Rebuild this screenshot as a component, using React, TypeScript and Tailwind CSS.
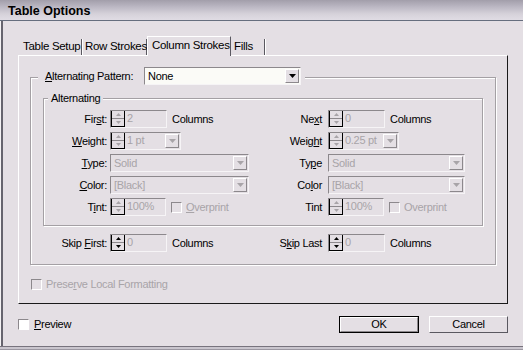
import React from "react";

const DIS = "text-[#a8a4a8]";

function U({ children }: { children: React.ReactNode }) {
  return <span className="underline underline-offset-[1px] decoration-1">{children}</span>;
}

function Tri({ up, color }: { up: boolean; color: string }) {
  return (
    <svg width="5" height="3" viewBox="0 0 5 3">
      <path d={up ? "M0 3H5L2.5 0Z" : "M0 0H5L2.5 3Z"} fill={color} />
    </svg>
  );
}

function SpinBtns({ on }: { on: boolean }) {
  const c = on ? "#000" : "#a8a4a8";
  return (
    <div className="flex flex-col w-[14px] h-full border-r border-b border-l border-black bg-[#e4dfe4] shrink-0">
      <div className="flex-1 flex items-center justify-center border-b border-[#8c888c]">
        <Tri up color={c} />
      </div>
      <div className="flex-1 flex items-center justify-center">
        <Tri up={false} color={c} />
      </div>
    </div>
  );
}

function ArrowBtn({ on }: { on: boolean }) {
  return (
    <div className="w-[14px] h-[14px] mt-[1px] mr-[1px] shrink-0 flex items-center justify-center bg-[#e4dfe4] border-t border-l border-[#ffffff] border-r border-b border-r-[#8c888c] border-b-[#8c888c]">
      <svg width="7" height="4" viewBox="0 0 7 4">
        <path d="M0 0H7L3.5 4Z" fill={on ? "#000" : "#a8a4a8"} />
      </svg>
    </div>
  );
}

function Spin({
  value,
  w,
  on = false,
  drop = false,
}: {
  value: string;
  w: string;
  on?: boolean;
  drop?: boolean;
}) {
  return (
    <div
      className={`flex h-[18px] ${w} shrink-0 border-t border-l border-[#8c888c] border-r border-b border-r-[#f6f4f6] border-b-[#f6f4f6]`}
    >
      <SpinBtns on={on} />
      <span className={`flex-1 pl-[2px] leading-[15px] ${DIS}`}>{value}</span>
      {drop && <ArrowBtn on={false} />}
    </div>
  );
}

function Drop({ value, w, on = false }: { value: string; w: string; on?: boolean }) {
  return (
    <div
      className={`flex h-[18px] ${w} shrink-0 border-t border-l border-[#8c888c] border-r border-b border-r-[#f6f4f6] border-b-[#f6f4f6] ${
        on ? "bg-[#fbfbf7]" : "bg-[#e4dfe4]"
      }`}
    >
      <span className={`flex-1 pl-[3px] leading-[16px] ${on ? "text-black" : DIS}`}>{value}</span>
      <ArrowBtn on={on} />
    </div>
  );
}

function Check({ on = true }: { on?: boolean }) {
  return (
    <div
      className={`w-[11px] h-[11px] shrink-0 border-t border-l border-[#8c888c] border-r border-b border-r-[#ffffff] border-b-[#ffffff] ${
        on ? "bg-white" : "bg-[#e4dfe4]"
      }`}
    />
  );
}

function Row({
  l1,
  c1,
  l2,
  c2,
}: {
  l1: React.ReactNode;
  c1: React.ReactNode;
  l2: React.ReactNode;
  c2: React.ReactNode;
}) {
  return (
    <div className="flex h-[18px]">
      <div className="flex w-[220px] items-center">
        <span className="w-[63px] text-right shrink-0">{l1}</span>
        <div className="ml-[3px] flex items-center">{c1}</div>
      </div>
      <div className="flex items-center">
        <span className="w-[58px] text-right shrink-0">{l2}</span>
        <div className="ml-[6px] flex items-center">{c2}</div>
      </div>
    </div>
  );
}

function Tab({ label, w, active = false }: { label: string; w: string; active?: boolean }) {
  if (active) {
    return (
      <div
        className={`${w} h-[20px] -mb-px relative z-10 whitespace-nowrap bg-[#e4dfe4] border-t border-l border-white border-r border-r-[#5a5860] pl-[4px] leading-[17px] text-[11.5px]`}
      >
        {label}
      </div>
    );
  }
  return (
    <div
      className={`${w} h-[16px] whitespace-nowrap border-r border-[#5a5860] shadow-[1px_0_0_#ffffff] pl-[3px] leading-[15px] text-[11.5px]`}
    >
      {label}
    </div>
  );
}

export default function App() {
  return (
    <div className="w-[523px] h-[350px] bg-[#e4dfe4] font-['Liberation_Sans',Arial,sans-serif] text-[11px] tracking-[-0.3px] text-black overflow-hidden flex flex-col shadow-[inset_1px_0_0_#f4f2f4,inset_3px_0_0_#66646e]">
      {/* title bar */}
      <div className="h-[21px] shrink-0 bg-[linear-gradient(to_bottom,#a29eaa,#bcb8c4_35%,#d6d2da_70%,#e0dce4)] border-b border-[#666e7e] pl-[8px] pt-[3px] font-bold text-[12.5px] tracking-normal leading-[16px]">
        Table Options
      </div>

      {/* tabs */}
      <div className="flex items-end pl-[20px] mt-[14px] h-[20px]">
        <Tab label="Table Setup" w="w-[62px]" />
        <Tab label="Row Strokes" w="w-[65px]" />
        <Tab label="Column Strokes" w="w-[84px]" active />
        <Tab label="Fills" w="w-[34px]" />
      </div>

      {/* panel */}
      <div className="ml-[18px] w-[490px] h-[249px] shrink-0 border-t border-l border-white border-r border-b border-r-[#1a1a1a] border-b-[#1a1a1a] pl-[11px] pt-[21px]">
        {/* outer group */}
        <div className="relative w-[466px] h-[188px] border border-[#a4a0a4] shadow-[inset_1px_1px_0_#ffffff,1px_1px_0_#ffffff]">
          <div className="absolute left-[7px] -top-[11px] flex items-center gap-[9px] bg-[#e4dfe4] pl-[7px] pr-[4px]">
            <span className="w-[90px] whitespace-nowrap">
              <U>A</U>lternating Pattern:
            </span>
            <Drop value="None" w="w-[157px]" on />
          </div>

          {/* inner group */}
          <div className="relative ml-[12px] mt-[20px] w-[440px] h-[128px] border border-[#a4a0a4] shadow-[inset_1px_1px_0_#ffffff,1px_1px_0_#ffffff] pt-[11px] flex flex-col gap-[4px]">
            <span className="absolute left-[4px] -top-[8px] bg-[#e4dfe4] px-[3px] leading-[14px]">Alternating</span>
            <Row
              l1={
                <span>
                  Fir<U>s</U>t:
                </span>
              }
              c1={
                <>
                  <Spin value="2" w="w-[57px]" />
                  <span className="ml-[5px]">Columns</span>
                </>
              }
              l2={
                <span>
                  Ne<U>x</U>t
                </span>
              }
              c2={
                <>
                  <Spin value="0" w="w-[57px]" />
                  <span className="ml-[5px]">Columns</span>
                </>
              }
            />
            <Row
              l1={
                <span>
                  <U>W</U>eight:
                </span>
              }
              c1={<Spin value="1 pt" w="w-[71px]" drop />}
              l2={
                <span>
                  Weig<U>h</U>t
                </span>
              }
              c2={<Spin value="0.25 pt" w="w-[71px]" drop />}
            />
            <Row
              l1={
                <span>
                  <U>T</U>ype:
                </span>
              }
              c1={<Drop value="Solid" w="w-[139px]" />}
              l2={
                <span>
                  Ty<U>p</U>e
                </span>
              }
              c2={<Drop value="Solid" w="w-[137px]" />}
            />
            <Row
              l1={
                <span>
                  <U>C</U>olor:
                </span>
              }
              c1={<Drop value="[Black]" w="w-[139px]" />}
              l2={
                <span>
                  Co<U>l</U>or
                </span>
              }
              c2={<Drop value="[Black]" w="w-[137px]" />}
            />
            <Row
              l1={
                <span>
                  T<U>i</U>nt:
                </span>
              }
              c1={
                <>
                  <Spin value="100%" w="w-[56px]" />
                  <div className="ml-[5px] flex items-center gap-[4px]">
                    <Check on={false} />
                    <span className={DIS}>
                      <U>O</U>verprint
                    </span>
                  </div>
                </>
              }
              l2={<span>Tint</span>}
              c2={
                <>
                  <Spin value="100%" w="w-[56px]" />
                  <div className="ml-[5px] flex items-center gap-[4px]">
                    <Check on={false} />
                    <span className={DIS}>Overprint</span>
                  </div>
                </>
              }
            />
          </div>

          {/* skip row */}
          <div className="ml-[13px] mt-[8px]">
            <Row
              l1={
                <span>
                  Skip <U>F</U>irst:
                </span>
              }
              c1={
                <>
                  <Spin value="0" w="w-[57px]" on />
                  <span className="ml-[5px]">Columns</span>
                </>
              }
              l2={
                <span>
                  S<U>k</U>ip Last
                </span>
              }
              c2={
                <>
                  <Spin value="0" w="w-[57px]" on />
                  <span className="ml-[5px]">Columns</span>
                </>
              }
            />
          </div>
        </div>

        {/* preserve */}
        <div className="flex items-center gap-[4px] mt-[11px] ml-[1px]">
          <Check on={false} />
          <span className={DIS}>
            Prese<U>r</U>ve Local Formatting
          </span>
        </div>
      </div>

      {/* bottom row */}
      <div className="flex items-center h-[17px] mt-[12px] pl-[18px] pr-[15px]">
        <div className="flex items-center gap-[5px]">
          <Check />
          <span>
            <U>P</U>review
          </span>
        </div>
        <div className="ml-auto flex gap-[10px]">
          <div className="w-[80px] h-[17px] border border-black">
            <div className="h-full border-t border-l border-white border-r border-b border-r-[#8c888c] border-b-[#8c888c] flex items-center justify-center leading-none">
              OK
            </div>
          </div>
          <div className="w-[79px] h-[17px] border-t border-l border-white border-r border-b border-r-[#5a5860] border-b-[#5a5860] flex items-center justify-center leading-none">
            Cancel
          </div>
        </div>
      </div>

      <div className="mt-auto h-[4px] border-t border-[#77737d] bg-[#c9c5cd] border-b border-b-[#9b97a1]" />
    </div>
  );
}
